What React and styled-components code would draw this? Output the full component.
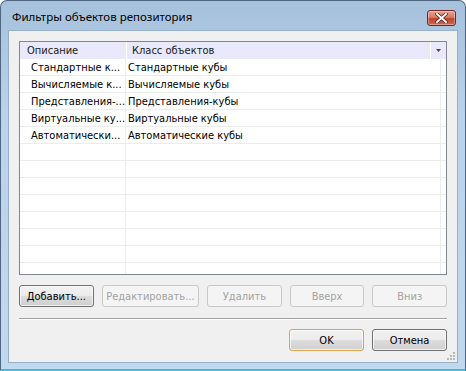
import React from "react"
import styled, { createGlobalStyle } from "styled-components"

const GlobalStyle = createGlobalStyle`
  html, body {
    margin: 0;
    padding: 0;
    background: #ffffff;
  }
  body {
    font-family: "DejaVu Sans Condensed", Tahoma, sans-serif;
    font-size: 11px;
  }
`

const Window = styled.div`
  width: 466px;
  height: 371px;
  box-sizing: border-box;
  border: 1px solid #4f6680;
  border-bottom: 2px solid #39c0dc;
  border-radius: 7px 7px 0 0;
  background: linear-gradient(to bottom, #a6c1dc 0%, #bad2ea 30%, #c2d8ee 100%);
  display: flex;
  flex-direction: column;
  padding: 0 7px 6px 7px;
`

const TitleBar = styled.div`
  height: 29px;
  display: flex;
  align-items: center;
  justify-content: space-between;
  padding: 0 2px 0 4px;
`

const Title = styled.span`
  font-family: "Noto Sans", "DejaVu Sans", sans-serif;
  font-size: 11.5px;
  color: #000;
  margin-top: 1px;
`

const CloseButton = styled.div`
  width: 29px;
  height: 16px;
  box-sizing: border-box;
  border: 1px solid #6e2a22;
  border-radius: 3px;
  background: linear-gradient(to bottom, #e8a090 0%, #d87a66 45%, #c0442c 55%, #d06850 100%);
  display: flex;
  align-items: center;
  justify-content: center;
  margin-top: 4px;
  box-shadow: inset 0 0 0 1px rgba(255, 255, 255, 0.35);
`

const Client = styled.div`
  flex: 1;
  background: #f0f0f0;
  border: 1px solid #96b0ca;
  display: flex;
  flex-direction: column;
  padding: 10px;
  position: relative;
`

const ListBox = styled.div`
  height: 234px;
  box-sizing: border-box;
  border: 1px solid #828790;
  background: #fff;
  display: flex;
  flex-direction: column;
  overflow: hidden;
`

const HeaderRow = styled.div`
  display: grid;
  grid-template-columns: 106px 1fr 15px;
  height: 17px;
  column-gap: 1px;
  flex-shrink: 0;
  background: #ffffff;
  & > div {
    background: #e9e9fb;
  }
`

const HeaderCell = styled.div`
  display: flex;
  align-items: center;
  padding-left: ${({ indent }) => indent || 6}px;
  color: #1a1a1a;
  white-space: nowrap;
`

const Row = styled.div`
  display: grid;
  grid-template-columns: 106px 1fr 5px;
  height: 17px;
  box-sizing: border-box;
  border-bottom: 1px solid #ececec;
  flex-shrink: 0;
`

const Cell = styled.div`
  display: flex;
  align-items: center;
  padding-left: ${({ indent }) => indent}px;
  border-right: ${({ divider }) => (divider ? "1px solid #ececec" : "none")};
  white-space: nowrap;
  overflow: hidden;
  color: #000;
  padding-top: 1px;
`

const ButtonRow = styled.div`
  display: flex;
  gap: 8px;
  margin-top: 10px;
`

const Button = styled.div`
  width: ${({ w }) => w || 75}px;
  height: 22px;
  box-sizing: border-box;
  border: 1px solid ${({ disabled, focus }) => (focus ? "#e2a14c" : disabled ? "#c9c9c9" : "#707070")};
  border-radius: 3px;
  background: ${({ disabled }) =>
    disabled ? "#f4f4f4" : "linear-gradient(to bottom, #f2f2f2 0%, #ebebeb 50%, #dddddd 51%, #cfcfcf 100%)"};
  color: ${({ disabled }) => (disabled ? "#a3a3a3" : "#000")};
  display: flex;
  align-items: center;
  justify-content: center;
  box-shadow: ${({ disabled }) => (disabled ? "none" : "inset 0 0 0 1px rgba(255,255,255,0.7)")};
`

const Separator = styled.div`
  height: 0;
  border-top: 1px solid #a0a0a0;
  border-bottom: 1px solid #ffffff;
  margin-top: 11px;
`

const FooterRow = styled.div`
  display: flex;
  justify-content: flex-end;
  gap: 8px;
  margin-top: 9px;
`

const Grip = styled.svg`
  position: absolute;
  right: 1px;
  bottom: 1px;
`

const rows = [
  ["Стандартные к...", "Стандартные кубы"],
  ["Вычисляемые к...", "Вычисляемые кубы"],
  ["Представления-...", "Представления-кубы"],
  ["Виртуальные ку...", "Виртуальные кубы"],
  ["Автоматически...", "Автоматические кубы"],
]

const emptyRows = Array.from({ length: 8 })

const App = () => {
  return (
    <>
      <GlobalStyle />
      <Window>
        <TitleBar>
          <Title>Фильтры объектов репозитория</Title>
          <CloseButton>
            <svg width="13" height="10" viewBox="0 0 13 10">
              <path d="M2 1 L11 9 M11 1 L2 9" stroke="#5a1a12" strokeWidth="3.4" strokeLinecap="square" />
              <path d="M2 1 L11 9 M11 1 L2 9" stroke="#ffffff" strokeWidth="2" strokeLinecap="square" />
            </svg>
          </CloseButton>
        </TitleBar>
        <Client>
          <ListBox>
            <HeaderRow>
              <HeaderCell indent={7}>Описание</HeaderCell>
              <HeaderCell indent={5}>Класс объектов</HeaderCell>
              <HeaderCell indent={5}>
                <svg width="5" height="3" viewBox="0 0 5 3">
                  <path d="M0 0 H5 L2.5 3 Z" fill="#444" />
                </svg>
              </HeaderCell>
            </HeaderRow>
            {rows.map(([a, b]) => (
              <Row key={a}>
                <Cell indent={11} divider>{a}</Cell>
                <Cell indent={2} divider>{b}</Cell>
                <Cell />
              </Row>
            ))}
            {emptyRows.map((_, i) => (
              <Row key={i}>
                <Cell divider />
                <Cell divider />
                <Cell />
              </Row>
            ))}
          </ListBox>
          <ButtonRow>
            <Button>Добавить...</Button>
            <Button w={98} disabled>Редактировать...</Button>
            <Button disabled>Удалить</Button>
            <Button disabled>Вверх</Button>
            <Button disabled>Вниз</Button>
          </ButtonRow>
          <Separator />
          <FooterRow>
            <Button focus>OK</Button>
            <Button>Отмена</Button>
          </FooterRow>
          <Grip width="10" height="10" viewBox="0 0 10 10">
            <g fill="#b8b8b8">
              <rect x="7" y="1" width="2" height="2" />
              <rect x="4" y="4" width="2" height="2" />
              <rect x="7" y="4" width="2" height="2" />
              <rect x="1" y="7" width="2" height="2" />
              <rect x="4" y="7" width="2" height="2" />
              <rect x="7" y="7" width="2" height="2" />
            </g>
          </Grip>
        </Client>
      </Window>
    </>
  )
}

export default App
